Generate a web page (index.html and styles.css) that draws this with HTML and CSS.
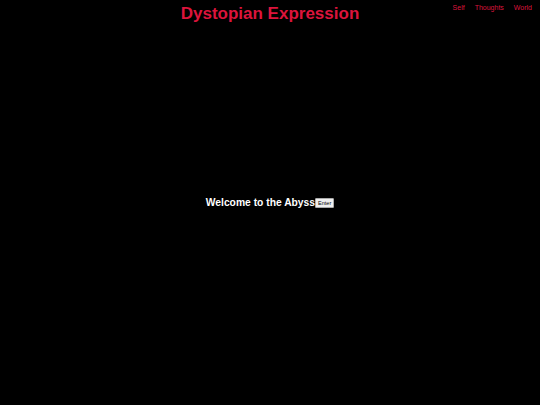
FILE: index.html
```html
<!DOCTYPE html>
<html>
<head>
<meta charset="utf-8">
<link rel="stylesheet" href="styles.css">
</head>
<body>
<header class="header">
  <h1 class="title">Dystopian Expression</h1>
  <nav class="nav">
    <a class="nav-link" href="#">Self</a>
    <a class="nav-link" href="#">Thoughts</a>
    <a class="nav-link" href="#">World</a>
  </nav>
</header>
<main class="main">
  <h2 class="welcome">Welcome to the Abyss</h2><button class="enter">Enter</button>
</main>
</body>
</html>
```
FILE: styles.css
```css
html, body {
  margin: 0;
  padding: 0;
  height: 100%;
  background: #000;
  font-family: "Liberation Sans", Arial, sans-serif;
}
.header {
  position: absolute;
  top: 0;
  left: 0;
  right: 0;
  text-align: center;
}
.title {
  margin: 0;
  padding-top: 4px;
  font-size: 17px;
  line-height: 20px;
  font-weight: bold;
  color: #dc143c;
}
.nav {
  position: absolute;
  top: 4px;
  right: 8px;
  display: flex;
  gap: 10px;
}
.nav-link {
  color: #dc143c;
  text-decoration: none;
  font-size: 7px;
}
.main {
  height: 100%;
  display: flex;
  align-items: center;
  justify-content: center;
}
.welcome {
  margin: 0;
  color: #fff;
  font-size: 10.3px;
  font-weight: bold;
}
.enter {
  font-family: "Liberation Sans", Arial, sans-serif;
  font-size: 5.5px;
  line-height: 6px;
  padding: 1px 2px;
  background: #efefef;
  border: 1px solid #aaa;
  border-radius: 1px;
  color: #000;
}
```
